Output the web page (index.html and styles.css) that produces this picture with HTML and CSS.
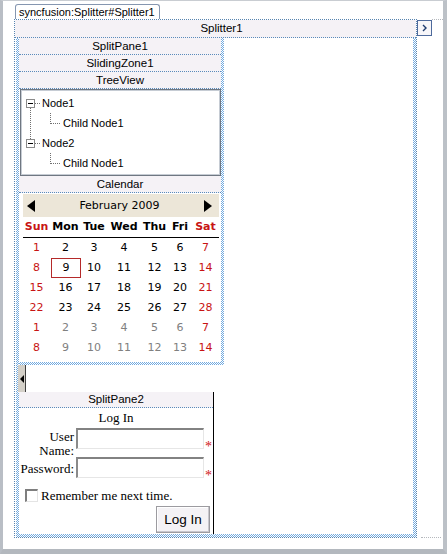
FILE: index.html
```html
<!DOCTYPE html>
<html>
<head>
<meta charset="utf-8">
<link rel="stylesheet" href="styles.css">
</head>
<body>
<div class="window">
  <div class="tab">syncfusion:Splitter#Splitter1</div>
  <div class="splitter">
    <div class="sp-head">Splitter1</div>
    <button class="collapse-btn" type="button"><svg width="13" height="14" viewBox="0 0 13 14"><polyline points="5,4 8,7 5,10" fill="none" stroke="#1d3b6e" stroke-width="1.4"/></svg></button>
    <div class="sp-body">
      <div class="sp-inner">
        <div class="pane1">
          <div class="pane1-inner">
            <div class="zhead">SplitPane1</div>
            <div class="zhead">SlidingZone1</div>
            <div class="zhead">TreeView</div>
            <div class="tree">
              <div class="trow"><span class="exp has-next"></span><span class="hline"></span><span class="tlabel">Node1</span></div>
              <div class="trow"><span class="elbow"></span><span class="clabel">Child Node1</span></div>
              <div class="trow"><span class="exp"></span><span class="hline"></span><span class="tlabel">Node2</span></div>
              <div class="trow"><span class="elbow"></span><span class="clabel">Child Node1</span></div>
            </div>
            <div class="zhead">Calendar</div>
            <div class="cal">
              <div class="cal-title"><span class="arr-l"></span><span>February 2009</span><span class="arr-r"></span></div>
              <div class="dow we">Sun</div><div class="dow">Mon</div><div class="dow">Tue</div><div class="dow">Wed</div><div class="dow">Thu</div><div class="dow">Fri</div><div class="dow we">Sat</div>
              <div class="d we">1</div><div class="d">2</div><div class="d">3</div><div class="d">4</div><div class="d">5</div><div class="d">6</div><div class="d we">7</div>
              <div class="d we">8</div><div class="d sel">9</div><div class="d">10</div><div class="d">11</div><div class="d">12</div><div class="d">13</div><div class="d we">14</div>
              <div class="d we">15</div><div class="d">16</div><div class="d">17</div><div class="d">18</div><div class="d">19</div><div class="d">20</div><div class="d we">21</div>
              <div class="d we">22</div><div class="d">23</div><div class="d">24</div><div class="d">25</div><div class="d">26</div><div class="d">27</div><div class="d we">28</div>
              <div class="d we">1</div><div class="d om">2</div><div class="d om">3</div><div class="d om">4</div><div class="d om">5</div><div class="d om">6</div><div class="d we">7</div>
              <div class="d we">8</div><div class="d om">9</div><div class="d om">10</div><div class="d om">11</div><div class="d om">12</div><div class="d om">13</div><div class="d we">14</div>
            </div>
          </div>
        </div>
        <div class="handle"><span class="handle-arr"></span></div>
        <div class="pane2">
          <div class="zhead p2">SplitPane2</div>
          <div class="login">
            <div class="login-title">Log In</div>
            <div class="frow r1">
              <label class="flabel un">User<br>Name:</label>
              <div class="fcell"><input class="tb" type="text"><span class="req">*</span></div>
            </div>
            <div class="frow r2">
              <label class="flabel pw">Password:</label>
              <div class="fcell"><input class="tb" type="password"><span class="req">*</span></div>
            </div>
            <div class="remember"><input class="cb" type="checkbox"><span>Remember me next time.</span></div>
            <div class="btn-row"><button class="btn" type="button">Log In</button></div>
          </div>
        </div>
      </div>
    </div>
  </div>
</div>
</body>
</html>
```

FILE: styles.css
```css
html, body {
  margin: 0;
  padding: 0;
  background: #fff;
}

.window {
  width: 447px;
  height: 554px;
  box-sizing: border-box;
  border-style: solid;
  border-width: 1px 4px 5px 3px;
  border-color: #c9cdd2 #bcc1c7 #b3b8be #b9bec5;
  padding: 3px 0 0 11px;
  background: #fff;
  font-family: "Liberation Sans", Arial, sans-serif;
  color: #000;
}

.tab {
  width: max-content;
  margin-left: 1px;
  height: 14px;
  line-height: 14px;
  font-size: 11px;
  padding: 0 4px 0 3px;
  border: 1px solid #8596b0;
  border-bottom: 0;
  border-radius: 3px 3px 0 0;
  background: #fff;
}

.splitter {
  position: relative;
  width: 403px;
  height: 519px;
  box-sizing: border-box;
  border: 1px dotted #5784b0;
}

.splitter::before {
  content: "";
  position: absolute;
  top: -1px;
  left: 417px;
  width: 11px;
  border-top: 1px dotted #b5b8bd;
}

.splitter::after {
  content: "";
  position: absolute;
  top: 517px;
  left: 406px;
  width: 20px;
  border-top: 1px dotted #b5b8bd;
}

.sp-head {
  height: 17px;
  line-height: 17px;
  font-size: 11.5px;
  text-align: center;
  padding-left: 12px;
  background: #f5f2f6;
  border-bottom: 1px dotted #5a8bbb;
}

.collapse-btn {
  position: absolute;
  top: 0;
  right: -16px;
  width: 15px;
  height: 16px;
  box-sizing: border-box;
  padding: 0;
  margin: 0;
  border: 1px solid #4e6a9c;
  background: #f7f6f9;
  display: flex;
  align-items: center;
  justify-content: center;
}

.sp-body {
  margin-left: 1px;
  width: 400px;
  height: 499px;
  box-sizing: border-box;
  padding: 0 3px 3px 3px;
  background-image: repeating-conic-gradient(#72aadf 0 25%, #ffffff 0 50%);
  background-size: 2px 2px;
}

.sp-inner {
  height: 100%;
  background: #fff;
  display: flex;
  flex-direction: column;
  align-items: flex-start;
}

.pane1 {
  width: 205px;
  height: 327px;
  box-sizing: border-box;
  padding: 0 3px 3px 0;
  background-image: repeating-conic-gradient(#72aadf 0 25%, #ffffff 0 50%);
  background-size: 2px 2px;
}

.pane1-inner {
  height: 100%;
  background: #fff;
}

.zhead {
  height: 16px;
  line-height: 16px;
  font-size: 11.5px;
  text-align: center;
  background: #f5f2f6;
  border-bottom: 1px dotted #5a8bbb;
}

.zhead.p2 {
  height: 15px;
  line-height: 15px;
}

/* TreeView */
.tree {
  margin-left: 1px;
  height: 87px;
  box-sizing: border-box;
  border: 1px solid #6f7781;
  box-shadow: inset 0 0 0 1px #c6ccd4;
  padding-top: 3px;
  font-size: 11px;
}

.trow {
  height: 20px;
  display: flex;
  align-items: center;
}

.exp {
  position: relative;
  width: 9px;
  height: 9px;
  box-sizing: border-box;
  margin-left: 5px;
  border: 1px solid #8a8a8a;
  background: #fff;
}

.exp::after {
  content: "";
  position: absolute;
  left: 1px;
  top: 3px;
  width: 5px;
  height: 1px;
  background: #000;
}

.exp.has-next::before {
  content: "";
  position: absolute;
  left: 3px;
  top: 8px;
  height: 31px;
  border-left: 1px dotted #707070;
}

.hline {
  width: 5px;
  border-top: 1px dotted #707070;
}

.tlabel {
  margin-left: 2px;
}

.elbow {
  align-self: flex-start;
  width: 9px;
  height: 10px;
  margin-left: 29px;
  border-left: 1px dotted #707070;
  border-bottom: 1px dotted #707070;
}

.clabel {
  margin-left: 3px;
}

/* Calendar */
.cal {
  margin: 1px 2px 0 4px;
  display: grid;
  grid-template-columns: 27px 31px 26px 34px 27px 24px 27px;
  font-family: "DejaVu Sans", Verdana, sans-serif;
  font-size: 11px;
}

.cal-title {
  grid-column: 1 / -1;
  height: 23px;
  display: flex;
  align-items: center;
  justify-content: space-between;
  background: #ece6d8;
}

.arr-l {
  width: 0;
  height: 0;
  margin-left: 4px;
  border-top: 6px solid transparent;
  border-bottom: 6px solid transparent;
  border-right: 8px solid #000;
}

.arr-r {
  width: 0;
  height: 0;
  margin-right: 7px;
  border-top: 6px solid transparent;
  border-bottom: 6px solid transparent;
  border-left: 8px solid #000;
}

.dow {
  height: 20px;
  line-height: 20px;
  text-align: center;
  font-weight: bold;
  border-bottom: 1px solid #000;
}

.d {
  height: 20px;
  line-height: 20px;
  text-align: center;
}

.we {
  color: #c81414;
}

.om {
  color: #808080;
}

.d.sel {
  height: 18px;
  line-height: 18px;
  margin-left: 1px;
  border: 1px solid #b52a2a;
}

/* Handle */
.handle {
  margin-left: -1px;
  width: 7px;
  height: 27px;
  background: #d4d0c8;
  border-right: 1px solid #404040;
  display: flex;
  align-items: center;
}

.handle-arr {
  width: 0;
  height: 0;
  margin-left: 2px;
  border-top: 4px solid transparent;
  border-bottom: 4px solid transparent;
  border-right: 4px solid #000;
}

/* SplitPane2 */
.pane2 {
  width: 195px;
  height: 142px;
  box-sizing: border-box;
  border-right: 1px solid #000;
}

.login {
  font-family: "Liberation Serif", "Times New Roman", serif;
  font-size: 13px;
}

.login-title {
  margin-top: 2px;
  height: 16px;
  line-height: 16px;
  text-align: center;
}

.frow {
  display: flex;
  align-items: flex-start;
}

.frow.r1 {
  margin-top: 2px;
  height: 28px;
}

.frow.r2 {
  margin-top: 1px;
}

.flabel {
  width: 55px;
  text-align: right;
  line-height: 14px;
  margin-right: 2px;
}

.flabel.un {
  margin-top: 2px;
}

.flabel.pw {
  margin-top: 5px;
}

.fcell {
  display: flex;
  align-items: flex-end;
}

.tb {
  appearance: none;
  width: 128px;
  height: 21px;
  box-sizing: border-box;
  margin: 0;
  padding: 0;
  border-style: solid;
  border-width: 2px 1px 1px 2px;
  border-color: #828282 #e6e6e6 #e6e6e6 #8a8a8a;
  background: #fff;
}

.req {
  margin-left: 1px;
  margin-bottom: -5px;
  font-size: 14px;
  line-height: 14px;
  color: #d01818;
}

.remember {
  margin-top: 11px;
  display: flex;
  align-items: center;
  height: 13px;
}

.cb {
  appearance: none;
  width: 13px;
  height: 13px;
  box-sizing: border-box;
  margin: 0 3px 0 6px;
  border-style: solid;
  border-width: 2px 1px 1px 2px;
  border-color: #7e7e7e #e4e4e4 #e4e4e4 #7e7e7e;
  background: #fff;
}

.btn-row {
  display: flex;
  justify-content: flex-end;
  padding-right: 3px;
  margin-top: 4px;
}

.btn {
  width: 54px;
  height: 27px;
  box-sizing: border-box;
  margin: 0;
  padding: 0;
  font-family: "Liberation Sans", Arial, sans-serif;
  font-size: 13.5px;
  color: #000;
  background: #f4f2f5;
  border: 1px solid #9c9ba0;
  box-shadow: inset -1px -1px 0 #c8c6cc, inset 1px 1px 0 #ffffff;
}
```
